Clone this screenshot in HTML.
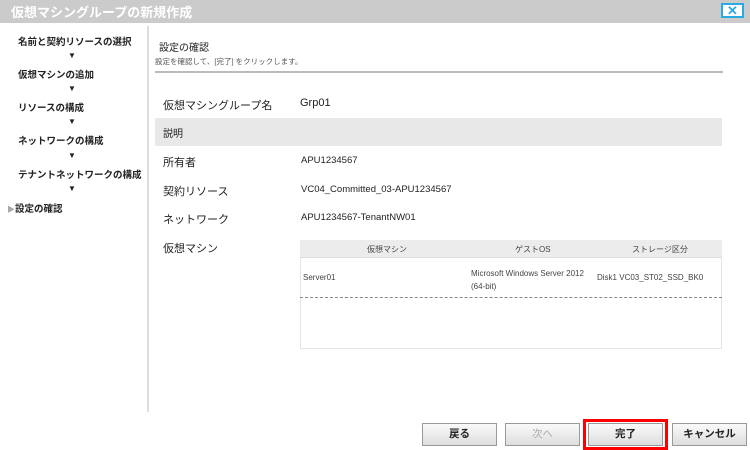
<!DOCTYPE html>
<html><head><meta charset="utf-8"><style>
*{margin:0;padding:0;box-sizing:border-box}
body{width:750px;height:450px;background:#fff;font-family:"Liberation Sans","Noto Sans CJK JP",sans-serif;color:#222;position:relative;overflow:hidden}
.a{position:absolute;white-space:nowrap}
.title{left:0;top:0;width:750px;height:23px;background:#cbcbcb}
.side{font-size:9.5px;font-weight:bold}
.arr{font-size:8px;left:68px}
.lbl{font-size:11px;left:163px}
.val{font-size:9.5px;left:301px}
.btn{top:423px;height:23px;width:75px;border:1px solid #999;background:linear-gradient(#fafafa,#ddd);font-size:10.5px;text-align:center;line-height:21px;font-weight:bold}
.t{font-size:8px;color:#444}
</style></head><body>
<div class="a title"></div>
<div class="a" style="left:11px;top:2px;font-size:13px;font-weight:bold;color:#fff">仮想マシングループの新規作成</div>
<div class="a" style="left:721px;top:3px;width:23px;height:15px;background:#fff;border:2px solid #29abe2;color:#29abe2;font-size:13px;font-weight:bold;line-height:11px;text-align:center">✕</div>
<div class="a" style="left:147px;top:26px;width:2px;height:386px;background:#ddd"></div>
<div class="a side" style="left:18px;top:34px">名前と契約リソースの選択</div>
<div class="a arr" style="top:51px">▼</div>
<div class="a side" style="left:18px;top:67px">仮想マシンの追加</div>
<div class="a arr" style="top:84px">▼</div>
<div class="a side" style="left:18px;top:100px">リソースの構成</div>
<div class="a arr" style="top:117px">▼</div>
<div class="a side" style="left:18px;top:133px">ネットワークの構成</div>
<div class="a arr" style="top:151px">▼</div>
<div class="a side" style="left:18px;top:167px">テナントネットワークの構成</div>
<div class="a arr" style="top:184px">▼</div>
<div class="a side" style="left:7px;top:201px"><span style="color:#aaa;font-size:8px">▶</span>設定の確認</div>
<div class="a" style="left:159px;top:39px;font-size:10px">設定の確認</div>
<div class="a" style="left:155px;top:56px;font-size:7.5px;color:#555">設定を確認して、[完了] をクリックします。</div>
<div class="a" style="left:155px;top:71px;width:568px;height:2px;background:#bbb"></div>
<div class="a lbl" style="top:97px">仮想マシングループ名</div>
<div class="a" style="left:300px;top:97px;font-size:11px">Grp01</div>
<div class="a" style="left:155px;top:118px;width:567px;height:28px;background:#e8e8e8"></div>
<div class="a lbl" style="top:125px;font-size:10px">説明</div>
<div class="a lbl" style="top:154px">所有者</div>
<div class="a val" style="top:155px">APU1234567</div>
<div class="a lbl" style="top:183px">契約リソース</div>
<div class="a val" style="top:184px">VC04_Committed_03-APU1234567</div>
<div class="a lbl" style="top:211px">ネットワーク</div>
<div class="a val" style="top:212px">APU1234567-TenantNW01</div>
<div class="a lbl" style="top:240px">仮想マシン</div>
<div class="a" style="left:300px;top:240px;width:422px;height:109px;border:1px solid #e4e4e4"></div>
<div class="a" style="left:300px;top:240px;width:422px;height:18px;background:#ececec;border-bottom:1px solid #ddd"></div>
<div class="a t" style="left:367px;top:244px">仮想マシン</div>
<div class="a t" style="left:515px;top:244px">ゲストOS</div>
<div class="a t" style="left:632px;top:244px">ストレージ区分</div>
<div class="a t" style="left:303px;top:273px">Server01</div>
<div class="a t" style="left:471px;top:267px;line-height:13px">Microsoft Windows Server 2012<br>(64-bit)</div>
<div class="a t" style="left:597px;top:273px">Disk1 VC03_ST02_SSD_BK0</div>
<div class="a" style="left:300px;top:297px;width:422px;border-top:1px dashed #888"></div>
<div class="a btn" style="left:422px">戻る</div>
<div class="a btn" style="left:505px;color:#aaa;font-weight:normal">次へ</div>
<div class="a" style="left:583px;top:419px;width:85px;height:31px;border:3px solid #f00"></div>
<div class="a btn" style="left:588px">完了</div>
<div class="a btn" style="left:672px">キャンセル</div>
</body></html>
